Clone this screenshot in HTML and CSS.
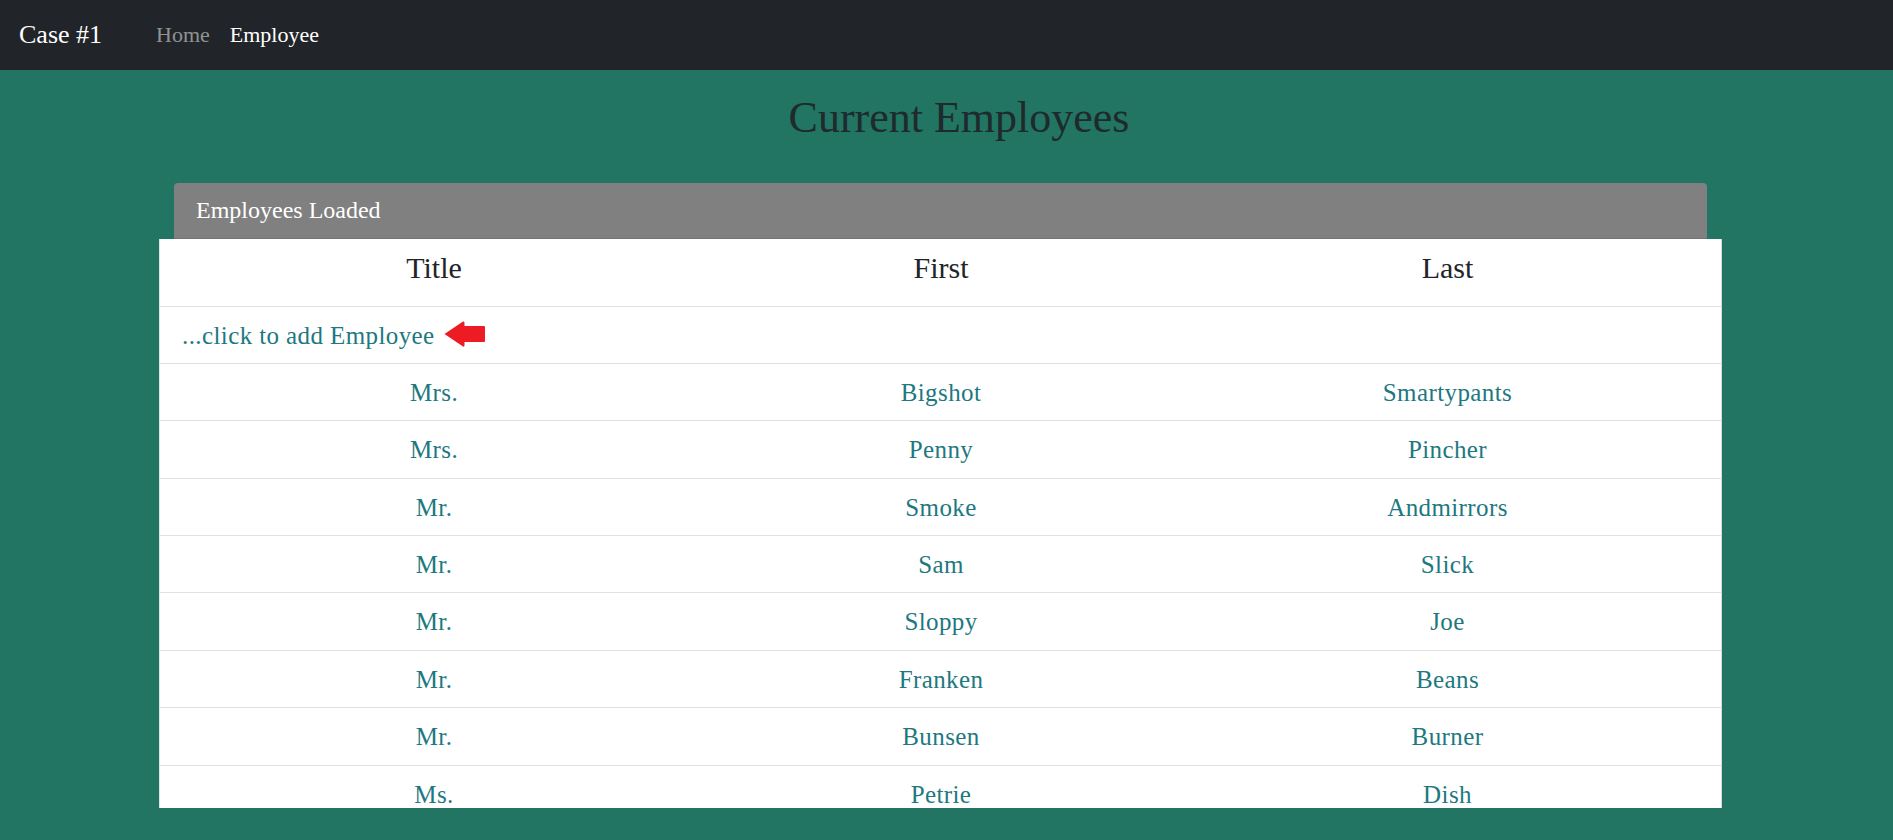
FILE: index.html
```html
<!DOCTYPE html>
<html lang="en">
<head>
<meta charset="utf-8">
<title>Case #1</title>
<link rel="stylesheet" href="styles.css">
</head>
<body>
<nav class="navbar">
  <a class="brand" href="#">Case #1</a>
  <ul class="nav-links">
    <li><a class="nav-link muted" href="#">Home</a></li>
    <li><a class="nav-link active" href="#">Employee</a></li>
  </ul>
</nav>
<main class="main">
  <h1 class="page-title">Current Employees</h1>
  <section class="panel">
    <div class="panel-header">Employees Loaded</div>
    <div class="table-box">
      <table class="emp-table">
        <colgroup>
          <col class="col-title">
          <col class="col-first">
          <col class="col-last">
        </colgroup>
        <thead>
          <tr><th>Title</th><th>First</th><th>Last</th></tr>
        </thead>
        <tbody>
          <tr class="add-row">
            <td colspan="3">
              <div class="add-wrap">
                <span class="add-link">...click to add Employee</span>
                <svg class="arrow" width="41" height="26" viewBox="0 0 41 26" aria-hidden="true">
                  <path d="M0.5 13 L19 0.5 Q20.5 0 20.5 2 L20.5 5 L40 5 Q41 5 41 6 L41 20 Q41 21 40 21 L20.5 21 L20.5 24.5 Q20.5 26 19 25.5 Z" fill="#ed1c24"/>
                </svg>
              </div>
            </td>
          </tr>
          <tr><td>Mrs.</td><td>Bigshot</td><td>Smartypants</td></tr>
          <tr><td>Mrs.</td><td>Penny</td><td>Pincher</td></tr>
          <tr><td>Mr.</td><td>Smoke</td><td>Andmirrors</td></tr>
          <tr><td>Mr.</td><td>Sam</td><td>Slick</td></tr>
          <tr><td>Mr.</td><td>Sloppy</td><td>Joe</td></tr>
          <tr><td>Mr.</td><td>Franken</td><td>Beans</td></tr>
          <tr><td>Mr.</td><td>Bunsen</td><td>Burner</td></tr>
          <tr><td>Ms.</td><td>Petrie</td><td>Dish</td></tr>
        </tbody>
      </table>
    </div>
  </section>
</main>
</body>
</html>
```
FILE: styles.css
```css
* { box-sizing: border-box; }

html, body {
  margin: 0;
  padding: 0;
}

body {
  background: #217562;
  font-family: "Liberation Serif", "Times New Roman", serif;
  color: #212529;
  height: 840px;
  overflow: hidden;
}

.navbar {
  height: 70px;
  background: #212529;
  display: flex;
  align-items: center;
  padding-left: 19px;
}

.brand {
  color: #ffffff;
  font-size: 26px;
  text-decoration: none;
  margin-right: 54px;
}

.nav-links {
  list-style: none;
  margin: 0;
  padding: 0;
  display: flex;
  gap: 20px;
}

.nav-link {
  font-size: 22px;
  text-decoration: none;
}

.nav-link.muted { color: rgba(255, 255, 255, 0.5); }
.nav-link.active { color: #ffffff; }

.main {
  display: flex;
  flex-direction: column;
}

.page-title {
  margin: 22px 0 38px;
  padding-left: 25px;
  text-align: center;
  font-weight: 400;
  font-size: 44px;
  line-height: 1.2;
  color: #1f2a2c;
}

.panel {
  margin: 0 186px 0 174px;
  display: flex;
  flex-direction: column;
}

.panel-header {
  background: #808080;
  color: #ffffff;
  font-size: 24px;
  line-height: 36px;
  padding: 9px 22px 10px;
  border-radius: 4px 4px 0 0;
  border-bottom: 1px solid #747474;
}

.table-box {
  margin: 0 -15px;
  height: 569px;
  overflow: hidden;
  background: #ffffff;
  border-left: 1px solid #e3e3e3;
  border-right: 1px solid #d8d8d8;
}

.emp-table {
  width: 100%;
  border-collapse: collapse;
  table-layout: fixed;
}

.col-title { width: 548px; }
.col-first { width: 466px; }

.emp-table th {
  font-weight: 400;
  font-size: 30px;
  line-height: 45px;
  padding: 6px 0 16px;
  text-align: center;
  color: #212529;
  border-bottom: 1px solid #dee2e6;
}

.emp-table td {
  font-size: 25px;
  line-height: 36px;
  letter-spacing: 0.4px;
  padding: 11px 0 9.4px;
  text-align: center;
  color: #1d7880;
  border-bottom: 1px solid #dee2e6;
}

.add-row td {
  text-align: left;
  padding-left: 22px;
  padding-bottom: 9px;
}

.add-wrap {
  display: flex;
  align-items: center;
  height: 36px;
}

.add-link {
  cursor: pointer;
}

.arrow {
  margin-left: 9px;
  margin-top: -4px;
  flex: none;
}
```
